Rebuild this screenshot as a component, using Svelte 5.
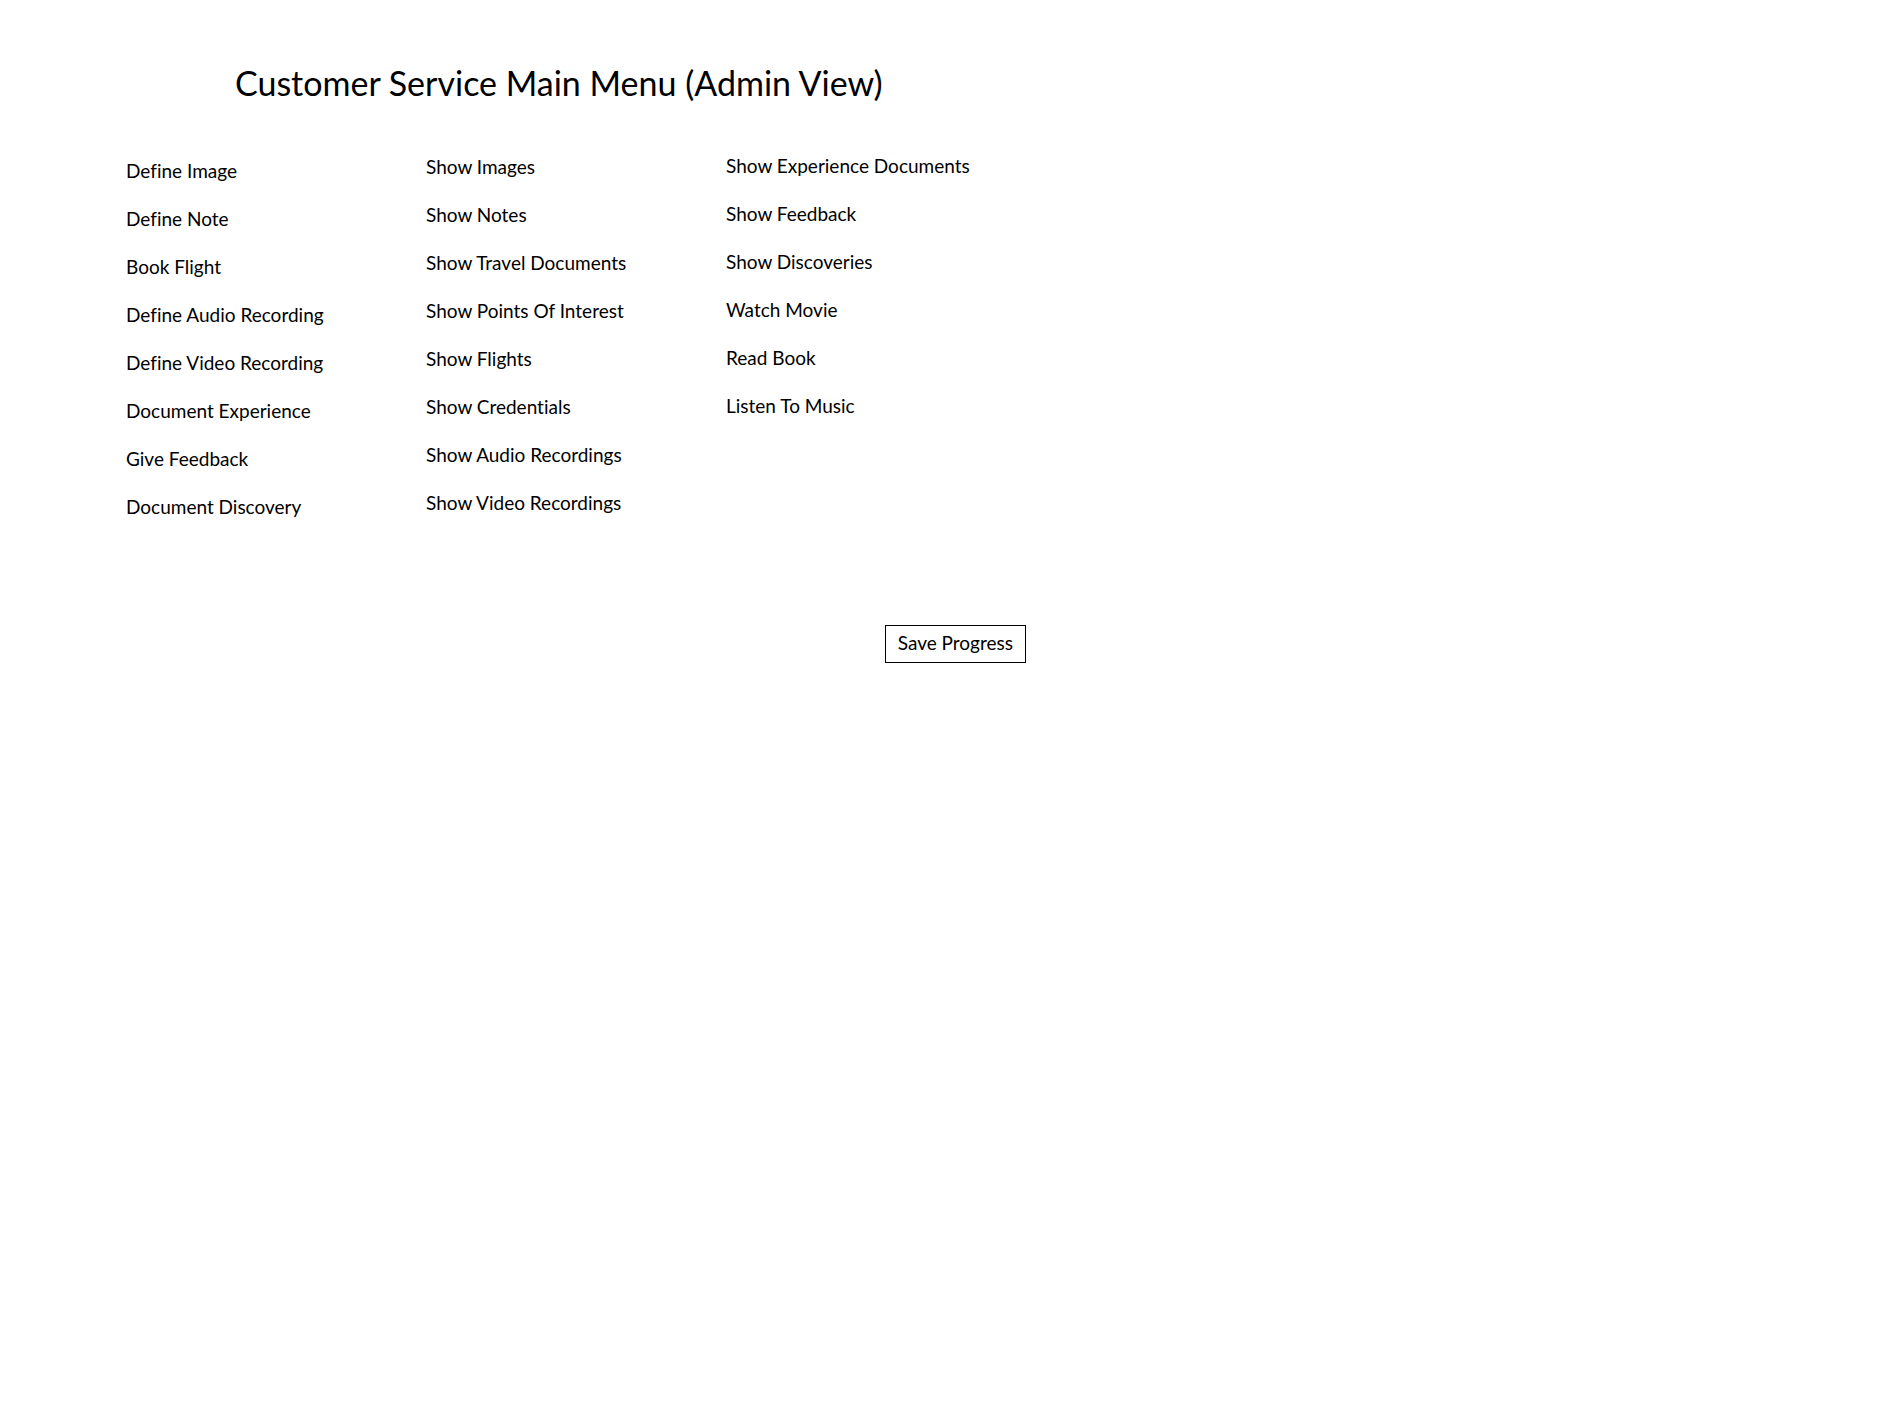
<script>
  const columns = [
    {
      name: 'define',
      items: [
        'Define Image',
        'Define Note',
        'Book Flight',
        'Define Audio Recording',
        'Define Video Recording',
        'Document Experience',
        'Give Feedback',
        'Document Discovery',
      ],
    },
    {
      name: 'show',
      items: [
        'Show Images',
        'Show Notes',
        'Show Travel Documents',
        'Show Points Of Interest',
        'Show Flights',
        'Show Credentials',
        'Show Audio Recordings',
        'Show Video Recordings',
      ],
    },
    {
      name: 'more',
      items: [
        'Show Experience Documents',
        'Show Feedback',
        'Show Discoveries',
        'Watch Movie',
        'Read Book',
        'Listen To Music',
      ],
    },
  ];

  const slug = (text) => '#' + text.toLowerCase().replaceAll(' ', '-');
</script>

<main>
  <h1>Customer Service Main Menu (Admin View)</h1>
  <nav aria-label="Main menu">
    {#each columns as column}
      <ul class={column.name}>
        {#each column.items as item}
          <li><a href={slug(item)}>{item}</a></li>
        {/each}
      </ul>
    {/each}
  </nav>
  <footer>
    <button type="button">Save Progress</button>
  </footer>
</main>

<style>
  :global(body) {
    margin: 0;
    background: #fff;
  }

  main {
    max-width: 900px;
    padding: 63px 24px 48px 126px;
    color: #000;
    font-family: Lato, 'Open Sans', sans-serif;
    font-size: 19px;
    font-variant-ligatures: none;
    line-height: 24px;
  }

  h1 {
    margin: 0 0 51px;
    padding-left: 109px;
    font-size: 34px;
    font-weight: 400;
    line-height: 40px;
  }

  nav {
    display: grid;
    grid-template-columns: repeat(3, 1fr);
  }

  ul {
    display: flex;
    flex-direction: column;
    gap: 24px;
    margin: 0;
    padding: 0;
    list-style: none;
  }

  .define {
    padding-top: 5px;
  }

  .show {
    padding-top: 1px;
  }

  a {
    color: inherit;
    text-decoration: none;
  }

  a:hover {
    text-decoration: underline;
  }

  footer {
    display: flex;
    justify-content: flex-end;
    margin-top: 106px;
  }

  button {
    padding: 5px 12px 7px;
    border: 1px solid #000;
    background: #fff;
    color: inherit;
    font: inherit;
    font-variant-ligatures: none;
    cursor: pointer;
  }
</style>
